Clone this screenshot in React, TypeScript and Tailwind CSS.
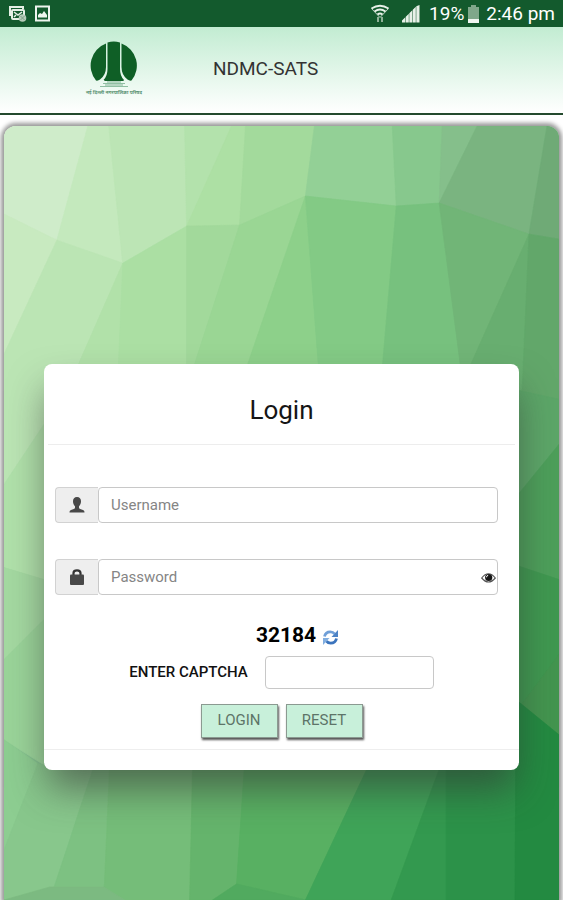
import type { ReactNode } from "react";

const facets: [string, string][] = [
  // upper row
  ["4,127 88,127 57,241 4,215", "#cfecca"],
  ["88,127 109,127 123,264 57,241", "#c4e9bd"],
  ["109,127 185,127 187,227 123,264", "#bce5b5"],
  ["185,127 232,127 187,227", "#b3e2ac"],
  ["232,127 246,127 240,226 187,227", "#ade0a4"],
  ["246,127 315,127 306,197 240,226", "#a3da9c"],
  ["315,127 393,127 397,207 306,197", "#93d096"],
  ["393,127 443,127 440,204 397,207", "#87c88d"],
  ["443,127 478,127 440,204", "#85bf8b"],
  ["478,127 548,127 530,235 440,204", "#7ab480"],
  ["548,127 560,127 560,240 530,235", "#6faa76"],
  // second row
  ["4,215 57,241 4,355", "#c8eac0"],
  ["57,241 123,264 72,380 44,425 4,485 4,355", "#bbe5b4"],
  ["123,264 72,380 118,380", "#b1e1a9"],
  ["123,264 187,227 187,380 118,380", "#abdfa3"],
  ["187,227 240,226 190,380 187,380", "#a2d99b"],
  ["240,226 306,197 243,380 190,380", "#9ad694"],
  ["306,197 243,380 320,380", "#8dd08a"],
  ["306,197 397,207 382,380 320,380", "#83ca85"],
  ["397,207 440,204 463,380 382,380", "#77c17e"],
  ["440,204 530,235 465,380 463,380", "#71b577"],
  ["530,235 465,380 523,395", "#68ae70"],
  ["530,235 560,240 560,400 523,395", "#62a76a"],
  // edges beside the form
  ["72,380 44,425 4,485 4,568 44,580", "#b0e1aa"],
  ["4,568 44,580 44,620 4,660", "#a4d9a1"],
  ["44,620 4,660 4,740 44,765", "#9ad499"],
  ["515,390 560,400 560,445 515,500", "#5ca668"],
  ["515,500 560,445 560,580 515,565", "#4d9f5a"],
  ["515,565 560,580 560,655 515,715", "#3f9850"],
  ["515,715 560,655 560,735", "#43954f"],
  // lower row
  ["4,740 38,764 4,850", "#8dcd91"],
  ["38,764 44,765 95,764 50,900 4,900 4,850", "#88c78c"],
  ["95,764 110,764 104,900 50,900", "#7dc182"],
  ["110,764 193,764 190,900 104,900", "#75bd79"],
  ["193,764 245,764 237,884 213,900 190,900", "#65b46c"],
  ["245,764 370,764 306,900 237,884", "#58b062"],
  ["237,884 306,900 213,900", "#51aa5f"],
  ["370,764 442,764 392,900 306,900", "#3fa458"],
  ["442,764 447,764 447,900 392,900", "#33994f"],
  ["447,764 517,764 516,900 447,900", "#2c9249"],
  ["517,700 560,735 560,900 516,900", "#238a41"],
  ["4,900 50,887 104,887 125,900", "#7cba81"],
];

function Backdrop() {
  return (
    <svg
      className="absolute inset-0 h-full w-full"
      viewBox="4 127 556 773"
      preserveAspectRatio="none"
      aria-hidden="true"
    >
      <defs>
        <linearGradient id="base" x1="0" y1="0" x2="1" y2="1">
          <stop offset="0" stopColor="#cfecca" />
          <stop offset="1" stopColor="#238a41" />
        </linearGradient>
      </defs>
      <rect x="4" y="127" width="556" height="773" fill="url(#base)" />
      {facets.map(([points, color]) => (
        <polygon key={points} points={points} fill={color} stroke={color} strokeWidth="0.7" />
      ))}
    </svg>
  );
}

function StatusBar() {
  return (
    <div className="flex h-[27px] items-center bg-[#135a2d] pr-2 pl-2 text-white">
      <svg width="20" height="18" viewBox="0 0 20 18" aria-hidden="true">
        <path d="M2 11V2h13v2" fill="none" stroke="#e5f0e5" strokeWidth="2" />
        <rect x="4" y="5" width="12" height="9" rx="1" fill="none" stroke="#e5f0e5" strokeWidth="2" />
        <path d="m6 7 4 3 4-3M6 12l2-2" fill="none" stroke="#e5f0e5" strokeWidth="1.5" />
        <circle cx="14.5" cy="13" r="3.8" fill="#b5cbb8" />
        <path d="m12.500 11 4 4m0-4-4 4" stroke="#7fa287" strokeWidth="1" />
      </svg>
      <svg className="ml-[7px]" width="15" height="17" viewBox="0 0 15 17" aria-hidden="true">
        <rect x="1" y="1.500" width="13" height="14" fill="none" stroke="#eef5ee" strokeWidth="2" />
        <path d="M3 12.500V10l2-2 2 1 2-3 3 4v2.500z" fill="#eef5ee" />
      </svg>
      <div className="ml-auto flex items-center">
        <svg width="20" height="20" viewBox="0 0 20 20" fill="none" stroke="#e8f1e8" aria-hidden="true">
          <path d="M1.500 4.500Q10-1 18.500 4.500M4.500 7.500Q10 3.500 15.500 7.500M7.500 10.500Q10 8.500 12.500 10.500" strokeWidth="1.800" />
          <path d="M1.500 4.500 10 13.500l8.500-9" strokeWidth="0.800" />
          <path d="M8 13v5M12 13v5" stroke="#9dbba3" strokeWidth="1.800" />
        </svg>
        <svg className="ml-[12px]" width="18" height="18" viewBox="0 0 18 18" fill="#e8f1e8" aria-hidden="true">
          <path d="M0 17.500v-2l3.300-3.300v5.300zM3.800 17.500v-5.800l3-3v8.800zM7.300 17.500V8.200l3-3v12.300zM10.800 17.500V4.700l3-3v15.800zM14.300 17.500V1.200l3.200-1.200v17.500z" />
        </svg>
        <span className="ml-[9px] font-['Roboto',sans-serif] text-[19px] leading-[27px]">19%</span>
        <svg className="ml-1" width="11" height="18" viewBox="0 0 11 18" aria-hidden="true">
          <path d="M3 0h5v2h3v16H0V2h3z" fill="#7fa78a" />
          <path d="M0 14h11v4H0z" fill="#f0f5f0" />
        </svg>
        <span className="ml-[7px] font-['Roboto',sans-serif] text-[19px] leading-[27px]">2:46 pm</span>
      </div>
    </div>
  );
}

function Logo() {
  return (
    <div className="flex w-[54px] flex-col items-center">
      <svg width="54" height="47" viewBox="0 0 54 47" aria-hidden="true">
        <path
          d="M19 2.500V26q0 8-6 12.500-2 1.500-4 1A23.500 23.500 0 0 1 19 2.500ZM34.500 2.500V26q0 8 6 12.500 2 1.500 4 1A23.500 23.500 0 0 0 34.500 2.500Z"
          fill="#0f5f26"
        />
        <path d="M20.500 1.500Q26.800-.5 33 1.500V28q0 7 4 11H16.500q4-4 4-11z" fill="#0f5f26" />
        <path d="M18 38.500h18l1 1.500H17z" fill="#0f5f26" />
        <path d="M16 42.500h22M13 45.500h28" stroke="#8fbfa2" strokeWidth="1.200" />
        <path d="M20 41h14M18 44h18" stroke="#7fb394" strokeWidth="1" />
      </svg>
      <span className="font-['Noto_Sans',sans-serif] text-[5px] leading-[8px] font-semibold whitespace-nowrap text-[#4b8765]">
        नई दिल्ली नगरपालिका परिषद
      </span>
    </div>
  );
}

function Field({ id, label, type, icon, trailing }: { id: string; label: string; type: string; icon: ReactNode; trailing?: ReactNode }) {
  return (
    <div className="relative flex h-9">
      <label
        htmlFor={id}
        aria-label={label}
        className="flex w-[43px] shrink-0 items-center justify-center rounded-l border border-r-0 border-[#d2d2d2] bg-[#eeeeee]"
      >
        {icon}
      </label>
      <input
        id={id}
        type={type}
        placeholder={label}
        className="min-w-0 flex-1 rounded border border-[#c8c8c8] bg-white px-3 text-[15px] text-[#333333] placeholder:text-[#858585]"
      />
      {trailing}
    </div>
  );
}

const actionClass =
  "h-[34px] w-[77px] border border-[#8b9a91] bg-[#c8f0da] pb-[2px] text-[15px] text-[#5d7468] shadow-[1px_2px_2px_#555555]";

function LoginCard() {
  return (
    <form
      className="relative mx-10 rounded-lg bg-white pb-5 shadow-[0_22px_38px_-4px_rgba(50,50,50,0.6)]"
      onSubmit={(e) => e.preventDefault()}
    >
      <h2 className="mx-1 border-b border-[#ededed] pt-7 pb-4 text-center text-[26px] leading-[36px] font-normal text-[#151515]">
        Login
      </h2>
      <div className="flex flex-col gap-9 pt-[42px] pr-[21px] pl-[11px]">
        <Field
          id="username"
          label="Username"
          type="text"
          icon={
            <svg width="16" height="16" viewBox="0 0 16 16" fill="#484848" aria-hidden="true">
              <path d="M8 0c2.600 0 4 1.700 4 4.200 0 2-.7 3.800-2 5v1.500c0 .6.4.9 1.200 1.200L14 13c1.200.5 1.500 1.200 1.500 2.500H.5C.5 14.200.8 13.500 2 13l2.800-1.100c.8-.3 1.200-.6 1.200-1.200V9.200c-1.300-1.200-2-3-2-5C4 1.700 5.400 0 8 0Z" />
            </svg>
          }
        />
        <Field
          id="password"
          label="Password"
          type="password"
          icon={
            <svg width="16" height="16" viewBox="0 0 16 16" aria-hidden="true">
              <path d="M4.500 7V4Q4.500 1.300 8 1.300t3.500 2.700V7" fill="none" stroke="#333333" strokeWidth="2.200" />
              <rect x="1" y="5.500" width="14" height="10.500" rx="1" fill="#484848" />
            </svg>
          }
          trailing={
            <button type="button" aria-label="Show password" className="absolute top-[13px] right-[2px]">
              <svg width="15" height="12" viewBox="0 0 15 12" aria-hidden="true">
                <path d="M.7 6Q7.500-2.500 14.300 6 7.500 14 .7 6Z" fill="#ffffff" stroke="#555555" strokeWidth="1.200" />
                <circle cx="7.700" cy="5.500" r="3.600" fill="#151515" />
                <path d="M5.500 5.300Q5.500 3.500 7.200 3.300" fill="none" stroke="#ffffff" strokeWidth="1" />
              </svg>
            </button>
          }
        />
      </div>
      <div className="mt-[26px] flex h-7 items-center justify-center gap-[6px] pl-[32px]">
        <span className="text-[21px] leading-7 font-bold text-black">32184</span>
        <button type="button" aria-label="Refresh captcha" className="pt-1">
          <svg width="17" height="17" viewBox="0 0 17 17" aria-hidden="true">
            <path d="M2.500 7.500Q3.500 2.800 8.300 2.800q2.700 0 4.300 2" fill="none" stroke="#6f9fd8" strokeWidth="2.800" />
            <path d="M16 1v7H9.500z" fill="#4d83c6" />
            <path d="M14.500 9.500q-1 4.700-5.800 4.700-2.700 0-4.300-2" fill="none" stroke="#3b74bd" strokeWidth="2.800" />
            <path d="M1 16V9h6.500z" fill="#82aee0" />
          </svg>
        </button>
      </div>
      <div className="mt-[7px] flex items-center justify-center">
        <label htmlFor="captcha" className="pb-[2px] text-[15px] leading-6 font-medium text-[#111111]">
          ENTER CAPTCHA
        </label>
        <input id="captcha" type="text" className="ml-[17px] h-[33px] w-[169px] rounded border border-[#c8c8c8] bg-white px-3 text-[15px]" />
      </div>
      <div className="mt-[15px] flex justify-center gap-2 border-b border-[#eeeeee] pb-[11px]">
        <button type="submit" className={actionClass}>
          LOGIN
        </button>
        <button type="reset" className={actionClass}>
          RESET
        </button>
      </div>
    </form>
  );
}

export default function App() {
  return (
    <div className="flex min-h-screen flex-col bg-white font-['Roboto',sans-serif]">
      <StatusBar />
      <header className="flex h-[88px] items-start border-b-2 border-[#244a2e] bg-linear-to-b from-[#c2ecd2] to-white pl-[87px]">
        <div className="pt-[14px]">
          <Logo />
        </div>
        <h1 className="ml-[72px] pt-7 text-[19px] leading-7 font-normal text-[#333333]">NDMC-SATS</h1>
      </header>
      <main className="relative mx-1 mt-[11px] flex-1 pt-[238px] pb-[130px]">
        <div className="absolute inset-0 overflow-hidden rounded-t-xl shadow-[0_0_4px_3px_#999999]">
          <Backdrop />
        </div>
        <LoginCard />
      </main>
    </div>
  );
}
